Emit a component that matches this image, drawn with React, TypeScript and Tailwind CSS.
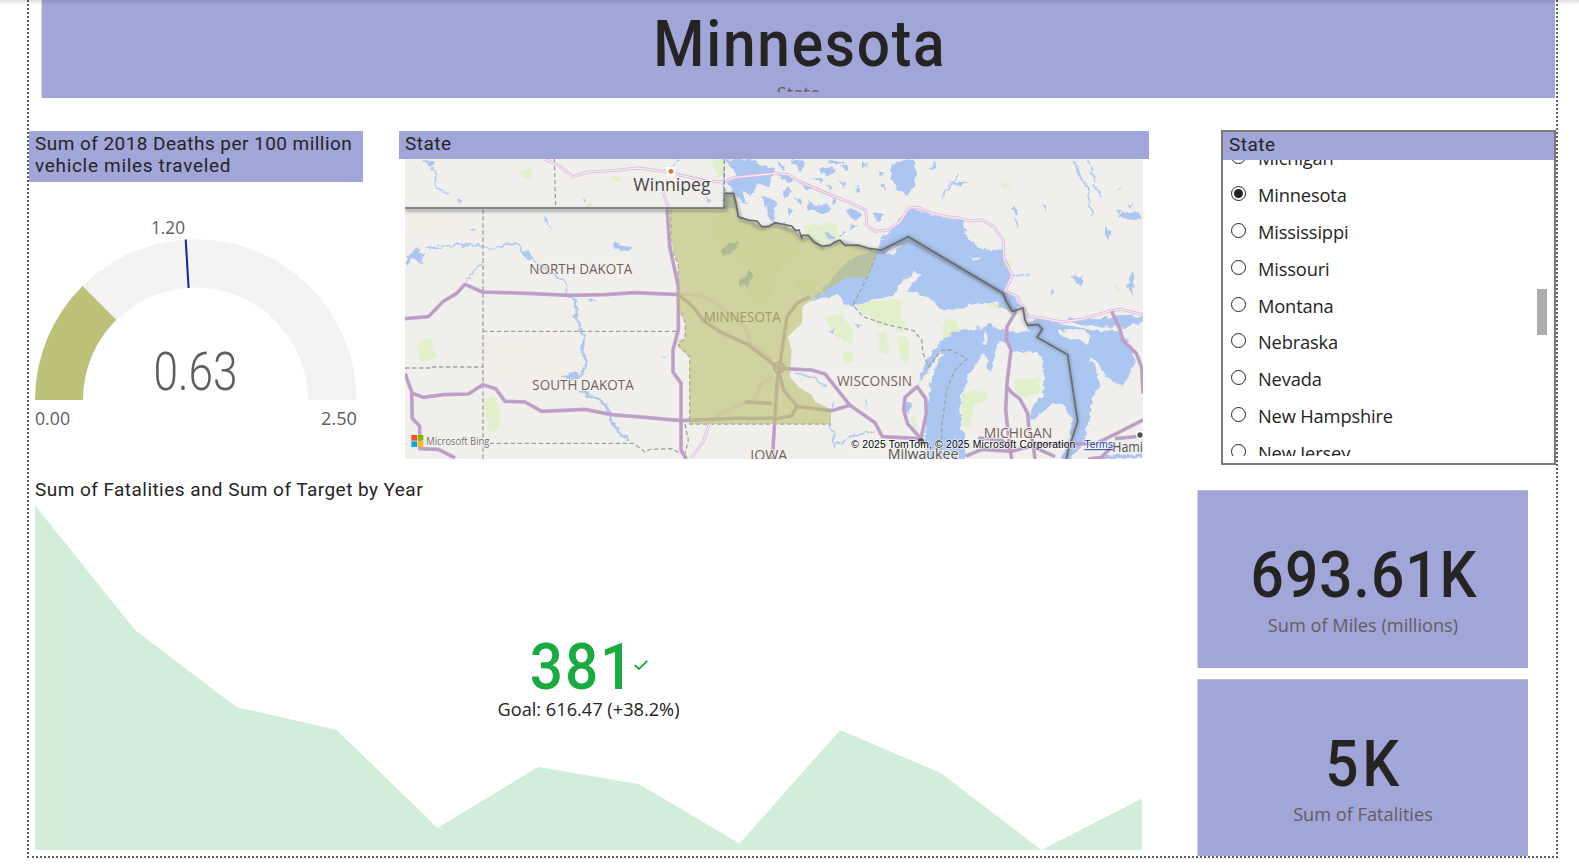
import React from "react";

const DIN = "font-['Roboto',sans-serif]";
const SEGOE = "font-['Open_Sans',sans-serif]";

const states = ["Michigan", "Minnesota", "Mississippi", "Missouri", "Montana", "Nebraska", "Nevada", "New Hampshire", "New Jersey"];

const water = "#abc6f1";

const lakes = [
  "M1245 543L1300 490L1340 440L1390 405L1450 388L1465 350L1510 305L1538 268L1570 268L1600 282L1660 292L1705 300L1712 340L1735 370L1765 388L1825 392L1828 420L1848 460L1845 490L1830 512L1860 525L1876 560L1850 577L1818 566L1812 545L1780 545L1740 552L1700 562L1660 572L1630 560L1600 532L1570 518L1535 522L1548 494L1585 460L1560 455L1530 475L1505 508L1480 530L1440 538L1378 558L1345 552L1335 522L1300 530Z",
  "M1588 1017L1590 955L1594 900L1598 850L1604 795L1620 752L1645 702L1632 700L1610 738L1572 795L1582 755L1612 692L1650 652L1690 634L1740 628L1775 616L1835 632L1895 655L1960 700L1845 690L1830 662L1812 670L1802 705L1782 762L1770 700L1745 722L1725 758L1698 830L1694 895L1708 950L1714 1017Z",
  "M1842 655L1870 636L1905 634L1902 606L1940 592L1990 608L2050 622L2100 632L2150 626L2190 650L2212 690L2222 730L2182 798L2142 778L2108 728L2082 714L2100 748L2116 800L2092 836L2082 900L2066 970L2024 1017L2000 1017L2026 968L2030 900L2010 855L1970 855L1940 882L1906 896L1912 858L1942 828L1950 780L1940 712L1912 680L1870 668Z",
  "M2000 596L2080 600L2140 590L2244 586L2244 608L2180 622L2080 618Z",
  "M2110 1017L2150 1004L2244 1005L2244 1017Z",
  "M1490 130L1555 119L1565 150L1560 205L1530 226L1505 200L1485 175Z",
  "M990 118L1060 122L1100 135L1140 150L1120 200L1088 190L1072 228L1040 208L1058 260L1020 228L995 180L1030 172Z",
  "M1100 225L1140 240L1138 310L1120 290L1108 250Z",
  "M1528 845L1545 850L1540 880L1528 872Z",
  "M30 425L50 395L62 383L90 402L82 418L88 440L72 425L52 415L36 438Z",
  "M378 395L400 390L412 424L396 418Z",
  "M655 368L680 378L712 382L704 394L680 390L656 384Z",
  "M84 118L118 120L118 138L102 138Z",
  "M495 770L548 752L560 772L538 780Z",
  "M2170 285L2230 280L2240 300L2190 298Z",
  "M2205 460L2218 468L2215 530L2200 500Z",
  "M2030 465L2060 470L2062 495L2040 488Z",
];

const marshes = [
  "M1142 122l30 18l-8 14zM1190 120l40 6l-14 30zM1270 150l40 -12l10 20l-24 10zM1300 120l50 6l-30 10zM1250 170l36 6l-10 14zM1330 180l30 14l-16 8zM1240 240l26 20l34 -8l8 16l-30 10l-44 -6zM1200 230l22 10l-10 14zM1350 268l36 2l16 18l-26 8l-20 -12zM1440 280l22 0l-8 22l-12 4zM1360 320l30 -6l-22 14zM1160 310l20 6l-12 12z",
  "M1600 150l22 -24l-2 18zM1648 180l30 6l40 0l-22 10zM1850 265l20 4l-4 18zM1860 290l14 20l-6 18zM1940 258l14 -4l-2 20zM2130 320l20 10l-8 26l-12 -10zM1970 500l8 16l-6 14zM2170 204l8 4l-4 8zM1380 195l16 20l-10 4zM1298 632l20 -8l-6 14zM1385 612l16 0l-8 14zM1405 836l8 8l-2 24z",
  "M184 238l18 2l-10 12zM224 326l20 2l-12 6zM580 538l20 2l-18 10zM800 710l14 -4l-4 10zM560 234l14 0l-8 6zM936 234l14 4l-10 4z",
  "M1150 160l34 8l10 18l-30 -6zM1160 210l20 -10l8 22l-18 6zM1220 200l24 -8l12 14l-20 8zM1290 195l22 6l-8 12zM1330 140l24 -8l4 20zM1400 125l20 4l-12 18zM1180 262l20 8l-14 14zM1310 235l14 8l-6 12zM1450 150l14 4l-4 20zM1460 190l10 4l-4 14zM1290 340l30 10l-14 14zM1330 350l20 -16l6 10zM2200 250l16 6l-6 16zM2160 268l18 4l-10 14z",
];

const forests = [
  "M376 154l20 -6l22 12l-20 18l-20 -6zM648 170l30 -4l-6 20l-24 2zM944 118l44 0l-2 40l-16 18l-14 -30zM564 256l30 -4l-6 12l-20 0zM76 660l30 -8l14 40l10 20l-50 12l-14 -20zM272 834l22 -6l20 34l4 50l-16 24l-24 -6l-8 -50z",
  "M1225 320l80 -14l24 10l0 44l-50 14l-40 -28zM1290 590l44 -12l20 24l24 50l-20 20l-30 -20l-20 -30zM1382 558l60 -18l80 0l0 70l-60 12l-40 -30zM1645 660l36 0l14 -8l-4 -50l-36 -10l-14 30zM1345 700l30 -6l-4 34l-24 2zM1856 780l80 -8l0 40l-40 24l-34 -20zM1705 820l60 -6l10 20l-40 30l-10 60l-26 -6zM1820 190l14 -2l20 18l-34 8zM1834 418l20 2l-8 36l-12 -10zM1780 545l40 8l-4 22l-30 -16zM1548 890l16 -4l-8 50zM2160 480l10 20l18 40l-22 -28z",
  "M1450 640l20 -8l10 60l-24 8zM1508 650l34 6l0 70l-26 -8zM1500 600l30 6l-6 30l-20 -6z",
];

const canadaRoads = [
  "M448 118L486 134L534 170L580 156L650 152L730 144L800 154L860 166L935 184L985 186L1020 172L1085 166L1140 160L1180 164L1216 186L1300 222L1365 248L1412 270L1416 318L1440 334L1478 330L1512 308L1542 264L1568 262L1600 276L1650 290L1690 294L1720 302L1760 300L1796 320L1824 360L1828 420L1852 466L1830 512L1870 532L1878 558L1900 588L1940 594L2000 606L2060 598L2140 574L2180 568L2244 584",
  "M805 215L820 264",
  "M850 524L920 524L970 556L1050 620L1066 670L1130 720",
  "M1132 770L1098 792L1080 838L1030 856L968 886L940 920L925 965L890 1012",
];

const roads = [
  "M30 596L100 590L145 544L185 520L210 493L262 516L400 520L520 526L630 524L720 518L850 524L890 556L930 606L980 638L1060 674L1132 730L1150 745",
  "M816 264L824 380L850 500L850 630L834 690L834 756L858 790L858 990L874 1017",
  "M30 760L52 820L84 832L146 824L220 822L264 794L302 806L330 844L390 846L440 874L570 868L650 884L750 892L858 902L1040 894L1060 896L1140 894",
  "M50 820L52 896L74 918L74 986L130 988L180 1014",
  "M1245 530L1208 548L1176 590L1164 670L1154 740L1146 790L1140 890L1132 1017",
  "M1150 745L1250 750L1290 762L1365 856L1440 908L1462 950L1575 956",
  "M1150 750L1166 810L1206 858L1190 888L1132 898M1206 860L1310 872L1365 856M1050 846L1132 850",
  "M1566 800L1530 832L1526 870L1538 912L1578 956L1594 880L1592 835Z",
  "M1864 572L1836 620L1834 660L1848 690L1836 790L1832 870L1842 960L1850 1017M1836 800L1852 820L1874 836L1898 880L1902 930L1914 970L1920 1017",
  "M1714 1008L1760 988L1850 994L1910 978L1980 1010M1914 970L2100 972L2170 938L2244 900M1850 994L1820 960L1750 954",
  "M2150 574L2174 626L2184 662L2224 700L2240 742L2244 820M2160 970L2120 1012L2080 1017M2244 948L2160 956",
];

const borders = [
  "M478 117L482 262M264 268L264 1017M264 634L850 634M30 744L110 744L110 741L264 741M284 970L716 970L750 996L765 988L830 986L858 1002",
  "M828 270L828 390L850 430L850 560L872 610L870 655L850 675L884 710L884 912L1308 912M870 912L880 960L870 1000",
  "M1450 390L1415 475L1374 555L1404 590L1480 615L1556 632L1580 660L1584 700L1600 740L1640 690L1670 690L1716 716L1680 750L1655 810L1640 920L1640 1000",
];

const rivers = [
  "M90 385L150 378L230 374L300 388L330 372L370 374L400 410L440 440L480 470L510 480L516 520",
  "M112 140L126 180L124 205L160 222M262 424L214 482M446 292L466 330M826 140L850 120M986 150L986 262",
  "M2040 120L2048 160L2076 200L2092 290M2080 120L2100 190L2120 235M1640 230L1690 165M1308 912L1318 980L1380 945L1440 935M1308 880L1316 850M1200 760L1260 775L1290 800M1850 470L1900 462",
];

const wideRivers = [
  "M516 524L545 544L542 590L568 656L560 700L576 720L560 760L540 780",
  "M556 810L590 830L630 850L650 900L670 934L705 962",
  "M1460 380L1490 330L1530 290",
];

function MapView() {
  const minnesota =
    "M820 264L988 264L988 220L1015 220L1022 245L1030 290L1060 300L1086 303L1100 320L1120 320L1140 308L1175 315L1202 332L1220 354L1240 346L1280 378L1305 376L1335 360L1350 376L1390 375L1420 385L1450 390L1415 473L1355 473L1245 543L1222 560L1221 610L1178 650L1190 690L1184 770L1210 800L1250 825L1260 845L1295 862L1308 880L1308 912L884 912L884 710L850 682L852 660L870 655L872 610L850 560L850 430L835 400L828 340Z";
  return (
    <svg viewBox="30 117 2214 900" className="ml-1.5 block h-[300px] w-[738px]" preserveAspectRatio="none">
      <defs>
        <filter id="soft" x="-5%" y="-20%" width="110%" height="140%">
          <feGaussianBlur stdDeviation="5" />
        </filter>
        <filter id="rough" x="-5%" y="-5%" width="110%" height="110%">
          <feTurbulence type="fractalNoise" baseFrequency="0.045" numOctaves="3" seed="4" />
          <feDisplacementMap in="SourceGraphic" scale="22" xChannelSelector="R" yChannelSelector="G" />
        </filter>
      </defs>
      <rect x="30" y="117" width="2214" height="900" fill="#f0efec" />
      <path d="M30 270L180 290L230 350L120 370L30 340ZM280 660L500 640L530 760L400 800L280 780Z" fill="#f3eee8" filter="url(#soft)" />
      <g filter="url(#rough)">
        <g fill="#e1efcb">{forests.map((d) => <path key={d} d={d} />)}</g>
        <g fill={water}>
          {lakes.map((d) => <path key={d} d={d} />)}
          {marshes.map((d) => <path key={d} d={d} />)}
        </g>
        <g fill="none" stroke="#afcaf2" strokeWidth="5">{rivers.map((d) => <path key={d} d={d} />)}</g>
        <g fill="none" stroke="#afcaf2" strokeWidth="9">{wideRivers.map((d) => <path key={d} d={d} />)}</g>
        <path d="M1470 400L1500 380L1524 374L1490 404ZM1724 416L1760 412L1740 424ZM1764 640L1774 632L1774 672L1766 676ZM1990 632L2060 630L2090 650L2080 676L2050 660L2000 650Z" fill="#f0efec" />
      </g>
      <g fill="none" stroke="#a3a39b" strokeWidth="4" strokeDasharray="13 8">
        {borders.map((d) => <path key={d} d={d} />)}
      </g>
      <g fill="none" strokeLinejoin="round">
        <g stroke="#dfb8dd" strokeWidth="9">{canadaRoads.map((d) => <path key={d} d={d} />)}</g>
        <g stroke="#f5eaf3" strokeWidth="4">{canadaRoads.map((d) => <path key={d} d={d} />)}</g>
        <g stroke="#c9a0d3" strokeWidth="11">{roads.map((d) => <path key={d} d={d} />)}</g>
        <g stroke="#b5a0bf" strokeWidth="5">{roads.map((d) => <path key={d} d={d} />)}</g>
      </g>
      <circle cx="1152" cy="743" r="15" fill="none" stroke="#b698bd" strokeWidth="7" />
      <g className={SEGOE} fontSize="45" fill="#735d5a">
        <text x="926" y="605" textLength="231" lengthAdjust="spacingAndGlyphs">MINNESOTA</text>
      </g>
      <path d={minnesota} fill="#bdc06f" fillOpacity="0.62" />
      <g fill="#b3d173" fillOpacity="0.16" filter="url(#rough)">
        <path d="M965 270L1060 300L1140 340L1210 400L1160 430L1110 560L1060 530L1070 450L950 330ZM1200 470L1270 480L1240 530L1200 520Z" />
      </g>
      <g fill="#9bab8b" fillOpacity="0.6" filter="url(#rough)">
        <path d="M976 390L1004 366L1036 364L1012 402L984 404ZM1030 480L1060 470L1066 450L1074 460L1056 500L1034 494ZM986 224L1016 224L1024 270L990 262Z" />
      </g>
      <path d="M30 271L994 271L994 222L1018 226L1036 298L1064 306L1100 326L1140 314L1202 338L1222 360L1242 352L1280 384L1335 366L1390 380L1460 396L1542 360L1828 524L1854 578" fill="none" stroke="#6f7274" strokeOpacity="0.5" strokeWidth="10" filter="url(#soft)" />
      <path d="M1450 390L1460 390L1540 350L1824 520L1834 545L1852 574L1884 564L1890 600L1898 616L1930 614L1942 628L1926 652L2018 704L2048 905L2020 990L2014 1017" fill="none" stroke="#6c7686" strokeOpacity="0.35" strokeWidth="15" strokeLinejoin="round" filter="url(#soft)" />
      <path d="M30 264L988 264L988 220L1015 220L1022 245L1030 290L1060 300L1086 303L1100 320L1120 320L1140 308L1175 315L1190 318L1202 332L1212 330L1220 354L1222 346L1240 346L1256 366L1280 378L1305 376L1320 366L1335 360L1350 376L1390 375L1420 385L1460 390L1540 350L1824 520L1834 545L1852 574L1884 564L1890 600L1898 616L1930 614L1942 628L1926 652L2018 704L2048 905L2020 990L2014 1017" fill="none" stroke="#666b6e" strokeWidth="5" strokeLinejoin="round" />
      <path d="M988 118V262" stroke="#88938a" strokeWidth="4" strokeDasharray="13 8" />

      <rect x="814" y="141" width="28" height="28" rx="4" fill="#fff" />
      <circle cx="828" cy="154" r="7" fill="#f26a32" />
      <g className={SEGOE} stroke="#f5f3f0" strokeWidth="6" paintOrder="stroke">
        <text x="715" y="213" fontSize="52" fill="#454545" textLength="232" lengthAdjust="spacingAndGlyphs">Winnipeg</text>
        <g fontSize="45" fill="#735d5a">
          <text x="403" y="462" textLength="309" lengthAdjust="spacingAndGlyphs">NORTH DAKOTA</text>
          <text x="412" y="810" textLength="304" lengthAdjust="spacingAndGlyphs">SOUTH DAKOTA</text>
          <text x="1326" y="797" textLength="225" lengthAdjust="spacingAndGlyphs">WISCONSIN</text>
          <text x="1766" y="955" textLength="206" lengthAdjust="spacingAndGlyphs">MICHIGAN</text>
          <text x="1066" y="1021" textLength="111" lengthAdjust="spacingAndGlyphs">IOWA</text>
        </g>
        <text x="1478" y="1018" fontSize="44" fill="#505050" textLength="212" lengthAdjust="spacingAndGlyphs">Milwaukee</text>
        <text x="2152" y="996" fontSize="44" fill="#505050" textLength="92" lengthAdjust="spacingAndGlyphs">Hami</text>
      </g>
      <circle cx="1578" cy="965" r="10" fill="#505050" />
      <circle cx="2235" cy="945" r="10" fill="#505050" stroke="#fff" strokeWidth="4" />
      <rect x="49" y="945" width="17" height="17" fill="#f25022" />
      <rect x="68" y="945" width="17" height="17" fill="#7fba00" />
      <rect x="49" y="964" width="17" height="17" fill="#00a4ef" />
      <rect x="68" y="964" width="17" height="17" fill="#ffb900" />
      <text className={SEGOE} x="94" y="975" fontSize="33" fill="#6e6e6e" stroke="#f6f5f3" strokeWidth="5" paintOrder="stroke" textLength="189" lengthAdjust="spacingAndGlyphs">Microsoft Bing</text>
      <g className="font-['Liberation_Sans',sans-serif]" fontSize="31" stroke="#fff" strokeOpacity="0.7" strokeWidth="5" paintOrder="stroke">
        <text x="1369" y="983" textLength="672" fill="#000">© 2025 TomTom, © 2025 Microsoft Corporation</text>
        <text x="2068" y="983" textLength="86" fill="#2443a8">Terms</text>
      </g>
      <path d="M2068 989H2154" stroke="#2443a8" strokeWidth="3" />
    </svg>
  );
}

function Gauge() {
  return (
    <svg viewBox="29 182 334 260" className="block h-[260px] w-[334px]">
      <path d="M35 400A160.750 160.750 0 0 1 356.500 400H308A112.500 112.500 0 0 0 83 400Z" fill="#f3f2f1" />
      <path d="M35 400A160.750 160.750 0 0 1 82.600 286L116.200 319.800A112.500 112.500 0 0 0 83 400Z" fill="#bdc177" />
      <path d="M185.700 239.500L188.600 288" stroke="#12239e" strokeWidth="2" />
      <g className={SEGOE} fontSize="18.500" fill="#605e5c">
        <text x="151" y="234" textLength="34" lengthAdjust="spacingAndGlyphs">1.20</text>
        <text x="35" y="425" textLength="35" lengthAdjust="spacingAndGlyphs">0.00</text>
        <text x="321" y="425" textLength="36" lengthAdjust="spacingAndGlyphs">2.50</text>
      </g>
      <text className={DIN} x="153.500" y="389.500" fontSize="53" fontWeight="300" fill="#605e5c" textLength="84" lengthAdjust="spacingAndGlyphs">0.63</text>
    </svg>
  );
}

function Kpi({ value, label, className, tracking }: { value: string; label: string; className: string; tracking: string }) {
  return (
    <div className={`flex w-[331px] flex-col items-center border-t border-l border-t-[#babee2] border-l-[#d0d3ec] bg-[#a0a6d8] ${className}`}>
      <div className={`${DIN} ml-[3px] scale-x-90 text-[65px] leading-[76px] font-medium text-[#252423] ${tracking}`}>{value}</div>
      <div className={`${SEGOE} -mt-[1px] text-[18.2px] leading-[26px] text-[#605e5c]`}>{label}</div>
    </div>
  );
}

export default function App() {
  return (
    <div className="relative flex h-[866px] w-[1579px] flex-col overflow-hidden bg-white">
      <div className="flex h-[858px] pl-[27px]">
        <div className="w-[2px] shrink-0 bg-[repeating-linear-gradient(to_bottom,#605e5c_0_2px,transparent_2px_4px)]" />
        <main className="flex w-[1527px] shrink-0 flex-col">
          <header className="ml-[12px] flex h-[98px] w-[1514px] shrink-0 flex-col items-center overflow-hidden border-l border-[#d0d3ec] bg-[#a0a6d8]">
            <h1 className={`${DIN} mt-[6px] ml-[3px] scale-x-90 text-[65px] leading-[76px] font-medium tracking-[2px] text-[#252423]`}>Minnesota</h1>
            <div className="h-[10px] overflow-hidden">
              <div className={`${SEGOE} -mt-[1px] text-[18.2px] leading-[24px] text-[#605e5c]`}>State</div>
            </div>
          </header>

          <div className="mt-[32px] flex h-[334px] shrink-0">
            <section className="mt-px w-[334px] shrink-0">
              <h2 className={`${DIN} h-[51px] w-[334px] bg-[#a0a6d8] pt-[2px] pl-1.5 text-[19px] leading-[22px] tracking-[0.45px] whitespace-nowrap text-[#252423]`}>
                Sum of 2018 Deaths per 100 million<br /><span className="tracking-[0.68px]">vehicle miles traveled</span>
              </h2>
              <Gauge />
            </section>
            <section className="mt-px ml-9 w-[750px] shrink-0">
              <h2 className={`${DIN} h-7 bg-[#a0a6d8] pt-[2px] pl-1.5 text-[19px] leading-[22px] tracking-[0.5px] text-[#252423]`}>State</h2>
              <MapView />
            </section>
            <section className="ml-[72px] flex h-[335px] w-[335px] shrink-0 flex-col border-2 border-[#7a7977]">
              <h2 className={`${DIN} h-[28px] shrink-0 bg-[#a0a6d8] pt-[2px] pl-[6px] text-[19px] leading-[22px] tracking-[0.5px] text-[#252423]`}>State</h2>
              <div className="flex h-[296px] justify-between overflow-hidden">
                <ul className="-mt-[22px] ml-[8px]">
                  {states.map((s) => (
                    <li key={s} className="flex h-[36.9px] items-center">
                      <span className="flex h-[15px] w-[15px] items-center justify-center rounded-full border border-[#252423]">
                        {s === "Minnesota" && <span className="h-[9px] w-[9px] rounded-full bg-[#252423]" />}
                      </span>
                      <span className={`${SEGOE} ml-3 pt-[3px] text-[18.3px] leading-6 tracking-[-0.16px] whitespace-nowrap text-[#252423]`}>{s}</span>
                    </li>
                  ))}
                </ul>
                <div className="mt-[129px] mr-[7px] h-[46px] w-[10px] bg-[#adadad]" />
              </div>
            </section>
          </div>

          <div className="flex h-[392px] shrink-0">
            <section className="ml-1.5 w-[1107px] shrink-0 pt-[15px]">
              <h2 className={`${DIN} text-[19px] leading-[22px] tracking-[0.45px] text-[#252423]`}>Sum of Fatalities and Sum of Target by Year</h2>
              <div className="-mt-px grid h-[350px]">
                <svg viewBox="35 500 1107 350" className="col-start-1 row-start-1 h-[350px] w-[1107px]">
                  <path d="M35 505.500L135.600 630.400L236.300 707L336.900 730L437.500 828L538.200 767L638.800 784L739.500 843.500L840.100 730L940.700 773L1041.400 850L1142 798.500V850H35Z" fill="#d1eeda" />
                </svg>
                <div className="col-start-1 row-start-1 flex flex-col items-center pt-[129px]">
                  <div className="flex items-center text-[#1aab40]">
                    <span className={`${DIN} -ml-[5px] scale-x-90 text-[65px] leading-[76px] font-medium tracking-[2px]`}>381</span>
                    <svg viewBox="0 0 14 10" className="-mt-[5px] -ml-[7px] h-[10px] w-[14px]" fill="none" stroke="currentColor" strokeWidth="1.800"><path d="M.7 5L5 9L13.300 .8" /></svg>
                  </div>
                  <div className={`${SEGOE} -mt-[9px] text-[18.2px] leading-[26px] text-[#252423]`}>Goal: 616.47 (+38.2%)</div>
                </div>
              </div>
            </section>
            <aside className="ml-[55px] flex flex-col gap-[11px] pt-[26px]">
              <Kpi value="693.61K" label="Sum of Miles (millions)" className="h-[178px] pt-[46px]" tracking="tracking-[1.2px]" />
              <Kpi value="5K" label="Sum of Fatalities" className="h-[177px] pt-[46px]" tracking="tracking-[4px]" />
            </aside>
          </div>
        </main>
        <div className="w-[2px] shrink-0 bg-[repeating-linear-gradient(to_bottom,#605e5c_0_2px,transparent_2px_4px)]" />
      </div>
      <div className="absolute top-[856px] left-[32px] h-[2px] w-[1526px] bg-[repeating-linear-gradient(to_right,#605e5c_0_2px,transparent_2px_4px)]" />
      <div className="absolute inset-x-0 top-0 h-[5px] bg-gradient-to-b from-black/12 to-transparent" />
    </div>
  );
}
